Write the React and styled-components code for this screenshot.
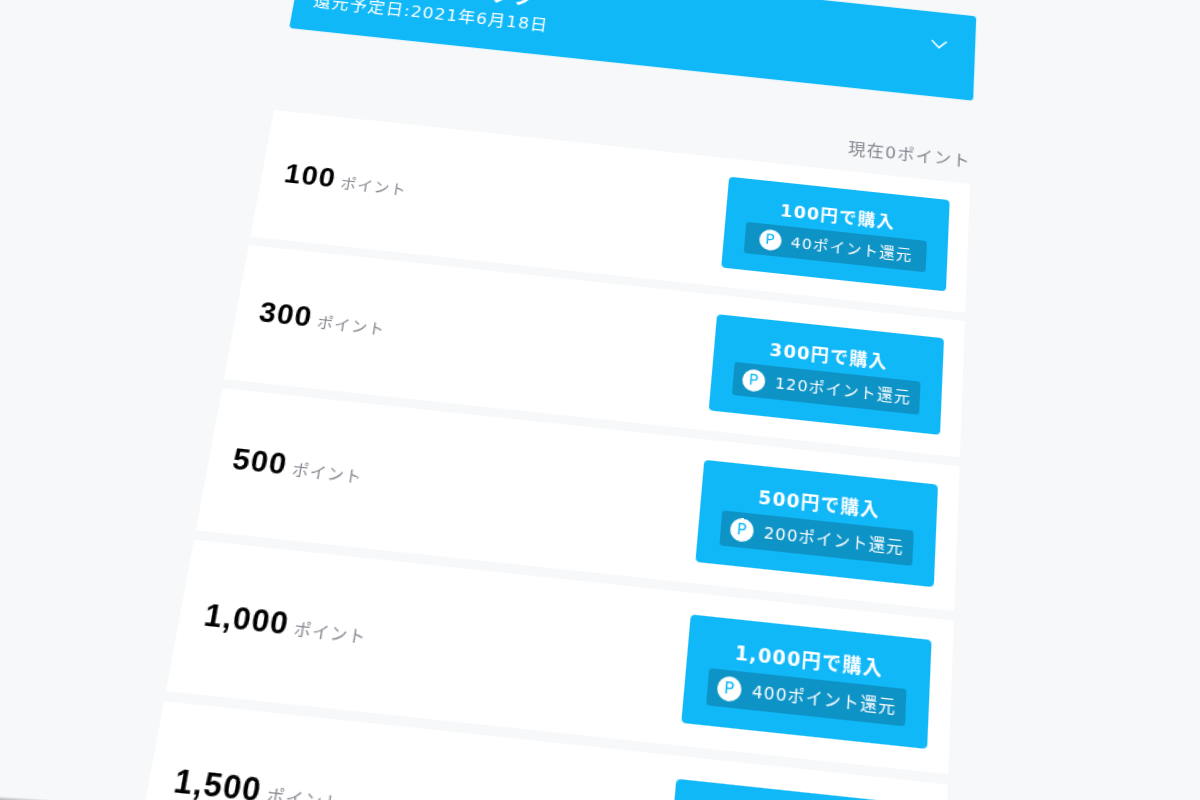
import styled, { createGlobalStyle } from "styled-components";

const SKY = "#10b8f8";
const SKY_DARK = "#0d93c6";
const PAPER = "#f6f8fa";
const GRAY = "#85888f";

const GlobalStyle = createGlobalStyle`
  * {
    box-sizing: border-box;
  }

  body {
    margin: 0;
    background: ${PAPER};
    font-family: "DejaVu Sans", "Noto Sans CJK JP", sans-serif;
    letter-spacing: 1px;
  }
`;

const Stage = styled.main`
  height: 100vh;
  overflow: hidden;
  background: linear-gradient(to top right, #b4b4b4, transparent 50%) 0 100% /
    60px 4px no-repeat;
`;

// the whole shop is one flat sheet, seen at an angle
// (the 8px rim keeps the tilted edges smooth)
const Sheet = styled.div`
  width: 100%;
  max-width: 656px;
  margin: -8px;
  padding: 8px;
  transform-origin: 8px 8px;
  transform: matrix3d(
    1.04924, 0.11153, 0, 0,
    -0.23445, 0.93674, 0, -0.00020454,
    0, 0, 1, 0,
    304.69, -54.99, 0, 1
  );
`;

const Banner = styled.button`
  display: flex;
  align-items: flex-start;
  justify-content: space-between;
  width: 100%;
  height: 88px;
  padding: 18px;
  border: 0;
  border-radius: 4px;
  background: ${SKY};
  box-shadow: 0 0 1px ${SKY};
  color: #fff;
  font: inherit;
  letter-spacing: inherit;
  text-align: left;
  cursor: pointer;
`;

const BannerText = styled.span`
  display: flex;
  flex-direction: column;
  gap: 4px;
`;

const BannerTitle = styled.span`
  font-size: 22px;
  font-weight: 700;
  line-height: 24px;
`;

const BannerDate = styled.span`
  font-size: 16px;
  line-height: 24px;
`;

const Chevron = styled.svg`
  width: 32px;
  height: 32px;
  fill: none;
  stroke: #fff;
  stroke-width: 1.6;
`;

const Balance = styled.p`
  margin: 50px 0 10px;
  color: ${GRAY};
  font-size: 16px;
  line-height: 24px;
  text-align: right;
`;

const List = styled.ul`
  display: flex;
  flex-direction: column;
  gap: 8px;
  margin: 0;
  padding: 0;
  list-style: none;
`;

const Row = styled.li`
  display: flex;
  align-items: center;
  justify-content: space-between;
  padding: 18px 18px 18px 20px;
  background: #fff;
`;

const Amount = styled.div`
  padding-bottom: 4px;
  color: ${GRAY};
  font-size: 14px;
`;

const Points = styled.strong`
  margin-right: 5px;
  color: #000;
  font-family: "Liberation Sans", sans-serif;
  font-size: 26px;
`;

const BuyButton = styled.button`
  display: flex;
  flex-direction: column;
  gap: 4px;
  width: 202px;
  height: 88px;
  padding: 18px 19px 16px;
  border: 0;
  border-radius: 4px;
  background: ${SKY};
  color: #fff;
  font: inherit;
  letter-spacing: inherit;
  cursor: pointer;
`;

const Price = styled.span`
  align-self: center;
  font-size: 16px;
  font-weight: 700;
  line-height: 20px;
`;

const Reward = styled.span`
  display: flex;
  align-items: center;
  justify-content: center;
  gap: 9px;
  align-self: stretch;
  height: 30px;
  border-radius: 3px;
  background: ${SKY_DARK};
  font-size: 14px;
  line-height: 28px;
  white-space: nowrap;
`;

const Coin = styled.span`
  width: 20px;
  height: 20px;
  border-radius: 50%;
  background: #fff;
  color: ${SKY};
  font-size: 14px;
  letter-spacing: 0;
  line-height: 18px;
  text-align: center;
`;

const plans = [
  { points: "100", reward: 40 },
  { points: "300", reward: 120 },
  { points: "500", reward: 200 },
  { points: "1,000", reward: 400 },
  { points: "1,500", reward: 600 },
];

function Plan({ points, reward }) {
  return (
    <Row>
      <Amount>
        <Points>{points}</Points>
        ポイント
      </Amount>
      <BuyButton type="button">
        <Price>{points}円で購入</Price>
        <Reward>
          <Coin>P</Coin>
          {reward}ポイント還元
        </Reward>
      </BuyButton>
    </Row>
  );
}

export default function App() {
  return (
    <Stage>
      <GlobalStyle />
      <Sheet>
        <Banner type="button">
          <BannerText>
            <BannerTitle>購入ポイントバック</BannerTitle>
            <BannerDate>還元予定日:2021年6月18日</BannerDate>
          </BannerText>
          <Chevron viewBox="0 0 32 32" aria-hidden="true">
            <path d="M9 12l7 7 7-7" />
          </Chevron>
        </Banner>
        <Balance>現在0ポイント</Balance>
        <List>
          {plans.map((plan) => (
            <Plan key={plan.points} {...plan} />
          ))}
        </List>
      </Sheet>
    </Stage>
  );
}
